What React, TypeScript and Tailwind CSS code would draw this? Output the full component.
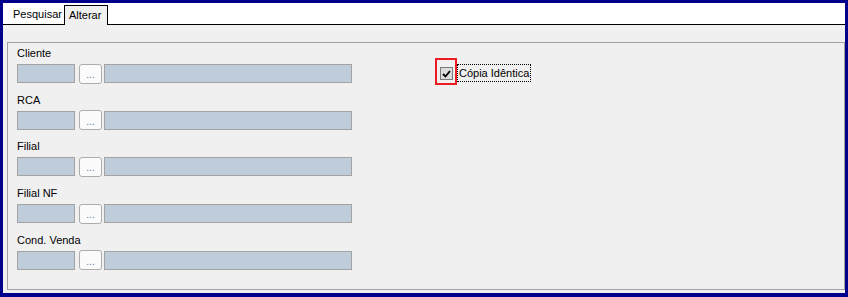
const fields = ["Cliente", "RCA", "Filial", "Filial NF", "Cond. Venda"];

const FieldRow = ({ label }: { label: string }) => {
    return (
        <div className="flex flex-col">
            <span className="h-[13px] leading-[13px] text-[11px] text-black">{label}</span>
            <div className="mt-[4px] flex items-center h-[19px]">
                <div className="w-[58px] h-[19px] bg-[#bfcddb] border border-[#a3a3a3]" />
                <button
                    type="button"
                    className="ml-[4px] w-[23px] h-[20px] rounded-[3px] border border-[#adadad] bg-[#fbfbfb] flex items-center justify-center text-[10px] leading-none text-[#6a7a98] pt-[3px]"
                >
                    ...
                </button>
                <div className="ml-[2px] w-[248px] h-[19px] bg-[#bfcddb] border border-[#a3a3a3]" />
            </div>
        </div>
    );
};

export default function App() {
    return (
        <div
            className="w-[848px] h-[297px] bg-[#00008b] pt-[3px] px-[3px] pb-[4px] flex flex-col"
            style={{ fontFamily: '"Liberation Sans", Arial, sans-serif' }}
        >
            {/* tab strip */}
            <div className="h-[22px] bg-white border-b border-black flex items-end">
                <div className="w-[61px] h-[19px] flex items-center pl-[10px] text-[11px] text-black">
                    Pesquisar
                </div>
                <div className="w-[44px] h-[20px] -mb-px bg-[#f0f0f0] border border-b-0 border-black flex items-center pl-[4px] text-[11px] text-black">
                    Alterar
                </div>
            </div>

            {/* content */}
            <div className="flex-1 bg-[#f0f0f0] pl-[4px] pt-[17px] pb-[3px]">
                <div className="h-full border border-[#a0a0a0] pl-[9px] pt-[4px] flex">
                    <div className="flex flex-col gap-[10.7px]">
                        {fields.map((f) => (
                            <FieldRow key={f} label={f} />
                        ))}
                    </div>

                    <div className="ml-[83px] mt-[11px] flex items-start">
                        <div className="w-[22px] h-[27px] border-2 border-[#ed1c24] pl-[3px] pt-[7px]">
                            <div className="w-[13px] h-[13px] border border-[#7a7a7a] bg-[#dcdcdc] flex items-center justify-center">
                                <svg width="9" height="8" viewBox="0 0 9 8">
                                    <path d="M1 4 L3.5 6.5 L8 1" stroke="#000" strokeWidth="1.8" fill="none" />
                                </svg>
                            </div>
                        </div>
                        <span className="mt-[6px] h-[18px] px-[1px] border border-dotted border-black leading-[16px] text-[11px] text-black">
                            Cópia Idêntica
                        </span>
                    </div>
                </div>
            </div>
        </div>
    );
}
